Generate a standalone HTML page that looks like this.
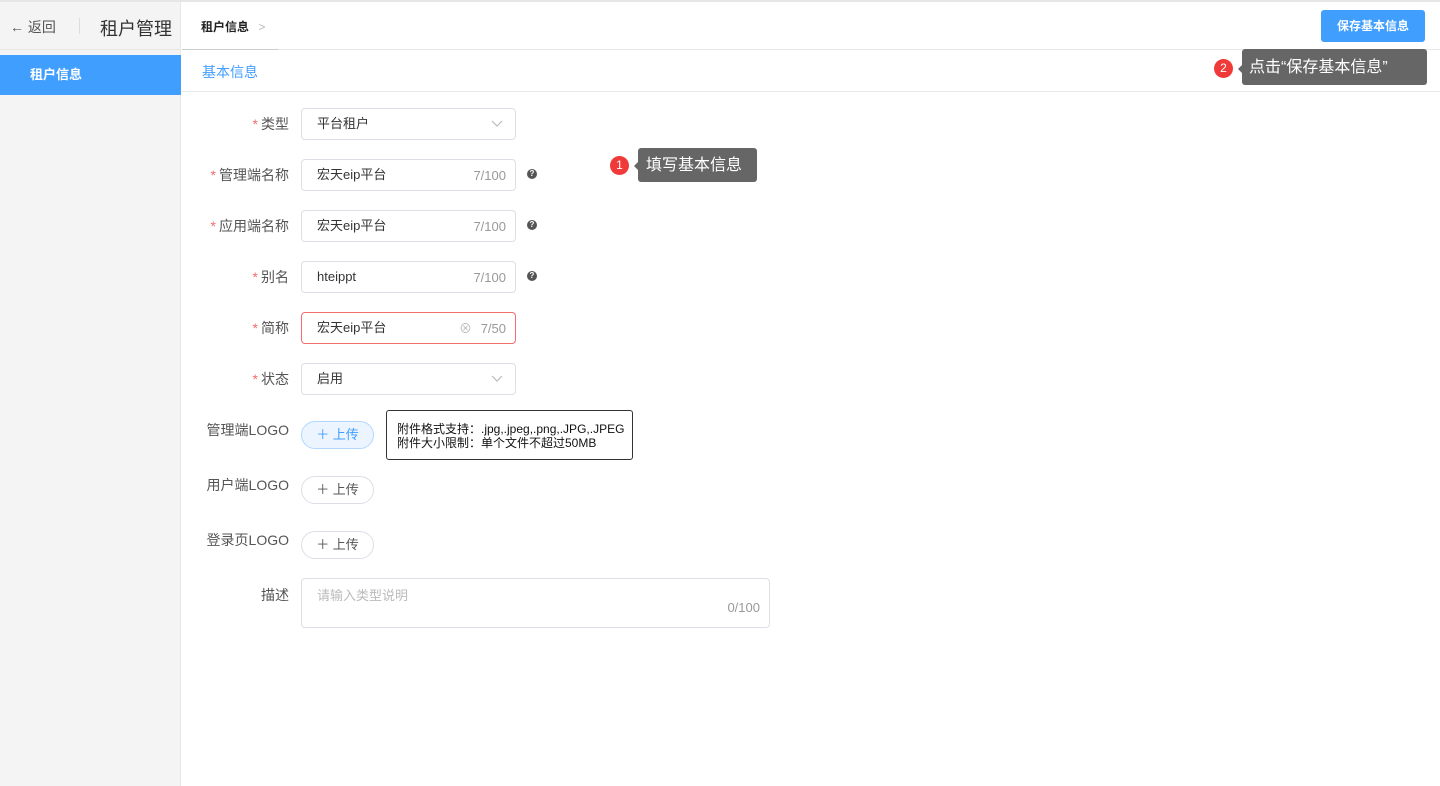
<!DOCTYPE html>
<html><head><meta charset="utf-8"><style>
*{box-sizing:border-box;margin:0;padding:0}
body{width:1440px;height:786px;overflow:hidden;background:#fff;font-family:"Liberation Sans","Noto Sans CJK SC",sans-serif;font-size:14px;color:#333;position:relative}
.abs{position:absolute}
.side{left:0;top:2px;width:181px;height:784px;background:#f4f4f4;border-right:1px solid #e8e8e8}
.lbl{position:absolute;width:120px;left:169px;text-align:right;font-size:14px;color:#555}
.lbl i{color:#f56c6c;font-style:normal;margin-right:3px}
.inp{position:absolute;left:301px;width:215px;height:32px;border:1px solid #dcdfe6;border-radius:4px;font-size:13px;color:#333;padding-left:15px;line-height:30px}
.cnt{position:absolute;right:9px;top:1px;color:#999;font-size:13px}
.q{position:absolute;left:527px;width:10px;height:10px;border-radius:50%;background:#555;color:#fff;font-size:8px;line-height:10px;text-align:center;font-weight:bold}
.up{position:absolute;left:301px;width:73px;height:28px;border:1px solid #dcdfe6;border-radius:14px;font-size:13px;color:#555;text-align:center;line-height:26px}
.arrow{position:absolute;width:0;height:0;border:5px solid transparent;border-right:5px solid #666}
</style></head><body>
<div class="abs" style="left:0;top:0;width:1440px;height:2px;background:#e6e6e6"></div>
<div class="abs side"></div>
<div class="abs" style="left:10px;top:17px;font-size:14px;color:#555">← 返回</div>
<div class="abs" style="left:79px;top:18px;width:1px;height:16px;background:#ddd"></div>
<div class="abs" style="left:100px;top:15px;font-size:18px;color:#333">租户管理</div>
<div class="abs" style="left:0;top:49px;width:181px;height:1px;background:#e6e6e6"></div>
<div class="abs" style="left:0;top:55px;width:181px;height:40px;background:#409eff;color:#fff;font-weight:bold;font-size:13px;padding-left:30px;line-height:40px">租户信息</div>

<div class="abs" style="left:201px;top:18px;font-size:12px;font-weight:bold;color:#222">租户信息 <span style="color:#bbb;font-weight:normal;margin-left:6px">&gt;</span></div>
<div class="abs" style="left:182px;top:49px;width:1258px;height:1px;background:#e8e8e8"></div>
<div class="abs" style="left:182px;top:49px;width:96px;height:1px;background:#ccc"></div>
<div class="abs" style="left:182px;top:91px;width:1258px;height:1px;background:#e8e8e8"></div>
<div class="abs" style="left:202px;top:62px;font-size:14px;color:#409eff">基本信息</div>
<div class="abs" style="left:1321px;top:10px;width:104px;height:32px;background:#409eff;border-radius:3px;color:#fff;font-size:12px;font-weight:bold;text-align:center;line-height:32px">保存基本信息</div>

<div class="abs" style="left:1214px;top:59px;width:19px;height:19px;border-radius:50%;background:#f03a3a;color:#fff;font-size:12px;text-align:center;line-height:19px">2</div>
<div class="arrow" style="left:1233px;top:64px"></div>
<div class="abs" style="left:1242px;top:49px;width:185px;height:36px;background:#666;border-radius:3px;color:#fff;font-size:16px;line-height:38px;padding-left:7px">点击“保存基本信息”</div>

<div class="abs" style="left:610px;top:156px;width:19px;height:19px;border-radius:50%;background:#f03a3a;color:#fff;font-size:12px;text-align:center;line-height:19px">1</div>
<div class="arrow" style="left:629px;top:161px"></div>
<div class="abs" style="left:638px;top:148px;width:119px;height:34px;background:#666;border-radius:3px;color:#fff;font-size:16px;line-height:36px;padding-left:8px">填写基本信息</div>

<div class="lbl" style="top:114px"><i>*</i>类型</div>
<div class="inp" style="top:108px">平台租户<svg class="abs" style="right:12px;top:11px" width="12" height="8"><path d="M1 1l5 5 5-5" fill="none" stroke="#bbb" stroke-width="1.2"/></svg></div>
<div class="lbl" style="top:165px"><i>*</i>管理端名称</div>
<div class="inp" style="top:159px">宏天eip平台<span class="cnt">7/100</span></div>
<div class="q" style="top:169px">?</div>
<div class="lbl" style="top:216px"><i>*</i>应用端名称</div>
<div class="inp" style="top:210px">宏天eip平台<span class="cnt">7/100</span></div>
<div class="q" style="top:220px">?</div>
<div class="lbl" style="top:267px"><i>*</i>别名</div>
<div class="inp" style="top:261px">hteippt<span class="cnt">7/100</span></div>
<div class="q" style="top:271px">?</div>
<div class="lbl" style="top:318px"><i>*</i>简称</div>
<div class="inp" style="top:312px;border-color:#f56c6c">宏天eip平台<span class="cnt" style="right:43px;color:#bbb">⊗</span><span class="cnt">7/50</span></div>
<div class="lbl" style="top:369px"><i>*</i>状态</div>
<div class="inp" style="top:363px">启用<svg class="abs" style="right:12px;top:11px" width="12" height="8"><path d="M1 1l5 5 5-5" fill="none" stroke="#bbb" stroke-width="1.2"/></svg></div>

<div class="lbl" style="top:420px">管理端LOGO</div>
<div class="up" style="top:421px;background:#ecf5ff;border-color:#b3d8ff;color:#409eff">＋ 上传</div>
<div class="abs" style="left:386px;top:410px;width:247px;height:50px;border:1px solid #333;border-radius:3px;background:#fff;font-size:12px;color:#111;padding:11px 0 0 10px;line-height:14px">附件格式支持：.jpg,.jpeg,.png,.JPG,.JPEG<br>附件大小限制：单个文件不超过50MB</div>
<div class="lbl" style="top:475px">用户端LOGO</div>
<div class="up" style="top:476px">＋ 上传</div>
<div class="lbl" style="top:530px">登录页LOGO</div>
<div class="up" style="top:531px">＋ 上传</div>
<div class="lbl" style="top:585px">描述</div>
<div class="abs" style="left:301px;top:578px;width:469px;height:50px;border:1px solid #dcdfe6;border-radius:4px;font-size:13px;color:#bbb;padding:6px 0 0 15px">请输入类型说明<span class="abs" style="right:9px;top:21px;color:#999">0/100</span></div>
</body></html>
